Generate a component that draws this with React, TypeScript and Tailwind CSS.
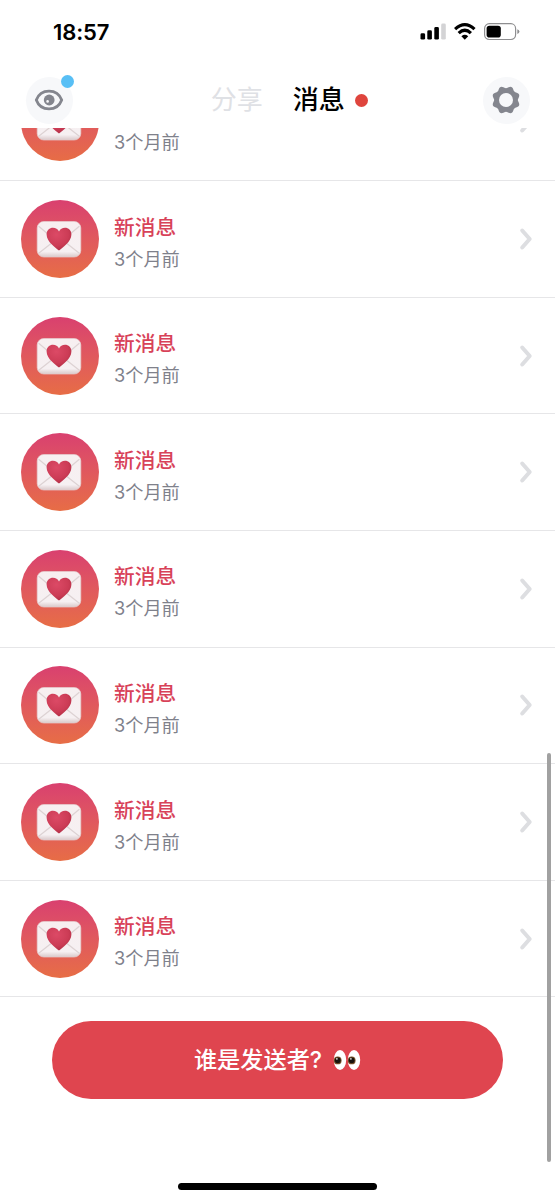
import React from 'react';

interface Message {
  id: number;
  title?: string;
  time: string;
}

// the first row is scrolled halfway under the header, only its time shows
const messages: Message[] = Array.from({ length: 8 }, (_, id) => ({
  id,
  title: id === 0 ? undefined : '新消息',
  time: '3个月前',
}));

// eight-lobed outline, valleys on the axes
const gearPath =
  Array.from({ length: 96 }, (_, i) => {
    const a = (i / 96) * Math.PI * 2;
    const r = 13 - 1.15 * Math.cos(8 * a);
    return `${i ? 'L' : 'M'}${(15 + r * Math.cos(a)).toFixed(2)} ${(15 + r * Math.sin(a)).toFixed(2)}`;
  }).join('') + 'Z';

function StatusBar() {
  return (
    <div className="flex h-[72px] shrink-0 items-start justify-between pl-[53px] pr-[35px] pt-[18px]">
      <span className="text-[22px] font-semibold leading-7 tracking-[-0.1px]">18:57</span>
      <svg className="mt-1" width="100" height="20" viewBox="0 0 100 20">
        <rect x="0.5" y="11.3" width="4.6" height="6.3" rx="1.4" />
        <rect x="7.3" y="8.3" width="4.6" height="9.3" rx="1.4" />
        <rect x="14.3" y="5" width="4.6" height="12.6" rx="1.4" />
        <rect x="21.2" y="1.6" width="4.6" height="16" rx="1.4" fill="#d3d3d5" />
        <g fill="none" stroke="#000" strokeWidth="3.2">
          <path d="M35.1 7.1Q44.8 -1.8 54.5 7.1" />
          <path d="M38.7 11.2Q44.8 5.3 50.9 11.2" />
        </g>
        <path d="M41.4 14.2Q44.8 11.3 48.2 14.2L44.8 17.8Z" />
        <rect x="64.6" y="1.7" width="31" height="15.8" rx="4.7" fill="none" stroke="#8e8e90" strokeWidth="1.2" />
        <rect x="66.6" y="3.7" width="14.2" height="11.8" rx="2.8" />
        <path d="M97.3 7.2Q99.4 7.9 99.4 9.6T97.3 12Z" fill="#8e8e90" />
      </svg>
    </div>
  );
}

function Header() {
  return (
    <header className="flex h-14 shrink-0 items-center justify-between px-[26px]">
      <button className="relative flex size-[47px] items-center justify-center rounded-full bg-[#f7f8fa]">
        <svg className="mr-[1px]" width="30" height="24" viewBox="0 0 30 24">
          <path
            d="M2.3 12C4.6 5.8 9.4 3.1 15 3.1S25.4 5.8 27.7 12C25.4 18.2 20.6 20.9 15 20.9S4.6 18.2 2.3 12Z"
            fill="none"
            stroke="#84868e"
            strokeWidth="2.8"
            strokeLinejoin="round"
          />
          <circle cx="15.2" cy="12" r="5.4" fill="#84868e" />
          <circle cx="13.6" cy="13.4" r="1.3" fill="#f7f8fa" />
        </svg>
        <span className="absolute -right-[1px] -top-[2px] size-[13px] rounded-full bg-[#58bff5]" />
      </button>
      <nav className="ml-[23px] flex items-center text-[26px] leading-10">
        <span className="text-[#dfe1e5]">分享</span>
        <span className="ml-[30px] font-medium text-black">消息</span>
        <span className="ml-[10px] size-[13px] rounded-full bg-[#df453d]" />
      </nav>
      <button className="-mr-[0.5px] flex size-[47px] items-center justify-center rounded-full bg-[#f7f8fa]">
        <svg width="30" height="30" viewBox="0 0 30 30">
          <path d={gearPath} fill="#84868e" />
          <circle cx="15" cy="15" r="7" fill="#f7f8fa" />
        </svg>
      </button>
    </header>
  );
}

function LoveLetter() {
  return (
    <svg className="mr-[2px]" width="46" height="38" viewBox="0 0 46 38">
      <defs>
        <linearGradient id="paper" x1="0" y1="0" x2="0" y2="1">
          <stop offset="0" stopColor="#f7eff0" />
          <stop offset="0.85" stopColor="#f6f0f2" />
          <stop offset="1" stopColor="#d9c9ca" />
        </linearGradient>
        <radialGradient id="heart" cx="0.4" cy="0.3" r="0.8">
          <stop offset="0" stopColor="#dc4a66" />
          <stop offset="0.6" stopColor="#cc3c56" />
          <stop offset="1" stopColor="#a92a3f" />
        </radialGradient>
      </defs>
      <rect x="1.2" y="1.5" width="43.6" height="35.5" rx="6.5" fill="url(#paper)" stroke="#e5cfd0" strokeWidth="0.7" />
      <g fill="none" stroke="#ddd2d3" strokeWidth="1.2" strokeLinecap="round">
        <path d="M3 33L17 22M43 33L29 22" />
        <path d="M3 6.5L19.5 20.5Q23 23 26.5 20.5L43 6.5" />
      </g>
      <path
        d="M23 30.6C20 28 10.6 21.7 10.6 14.4C10.6 10.2 13.6 7.8 17 7.8C19.7 7.8 21.8 9.2 23 11.4C24.2 9.2 26.3 7.8 29 7.8C32.4 7.8 35.4 10.2 35.4 14.4C35.4 21.7 26 28 23 30.6Z"
        fill="url(#heart)"
      />
    </svg>
  );
}

function MessageRow({ message }: { message: Message }) {
  return (
    <li className="flex h-[116.6px] shrink-0 items-center border-b border-[#e6e6e8] pl-[21px] pr-[22px]">
      <div className="flex size-[78px] items-center justify-center rounded-full bg-gradient-to-b from-[#d9406f] to-[#e76d45]">
        <LoveLetter />
      </div>
      <div className="ml-[15px] flex-1 pt-2">
        <p className="h-8 text-[20.7px] font-medium leading-8 text-[#d84259]">{message.title}</p>
        <p className="-mt-[1px] text-[18.2px] leading-8 text-[#7f818b]">{message.time}</p>
      </div>
      <svg width="14" height="24" viewBox="0 0 14 24">
        <path d="M3.2 3.5L10.7 12L3.2 20.5" fill="none" stroke="#dddee1" strokeWidth="4" strokeLinecap="round" strokeLinejoin="round" />
      </svg>
    </li>
  );
}

function Eyes() {
  return (
    <svg width="28" height="22" viewBox="0 0 28 22">
      {[7, 21].map((x) => (
        <g key={x}>
          <ellipse cx={x} cy="11" rx="6.2" ry="10" fill="#fff" />
          <circle cx={x - 2.3} cy="11.4" r="3.9" fill="#76502a" />
          <circle cx={x - 2.3} cy="11.3" r="2.9" fill="#17120d" />
          <circle cx={x - 3.1} cy="9.9" r="0.8" fill="#fff" />
        </g>
      ))}
    </svg>
  );
}

export default function App() {
  return (
    <div className="relative flex h-[1200px] w-[555px] flex-col overflow-hidden bg-white font-['Inter','Noto_Sans_CJK_SC',sans-serif] text-black">
      <StatusBar />
      <Header />
      <ul className="flex h-[869.4px] shrink-0 flex-col justify-end overflow-hidden">
        {messages.map((message) => (
          <MessageRow key={message.id} message={message} />
        ))}
      </ul>
      <div className="flex flex-1 flex-col items-center justify-between pb-[10px] pt-[23.6px]">
        <button className="flex h-[78px] w-[451px] items-center justify-center rounded-full bg-[#df454f] text-[23.2px] font-medium text-white">
          谁是发送者?
          <span className="ml-[11px]">
            <Eyes />
          </span>
        </button>
        <div className="h-[7px] w-[199px] rounded-full bg-black" />
      </div>
      {/* scroll indicator */}
      <div className="absolute right-[4px] top-[753px] h-[409px] w-[4px] rounded-full bg-[#a1a1a1]" />
    </div>
  );
}
